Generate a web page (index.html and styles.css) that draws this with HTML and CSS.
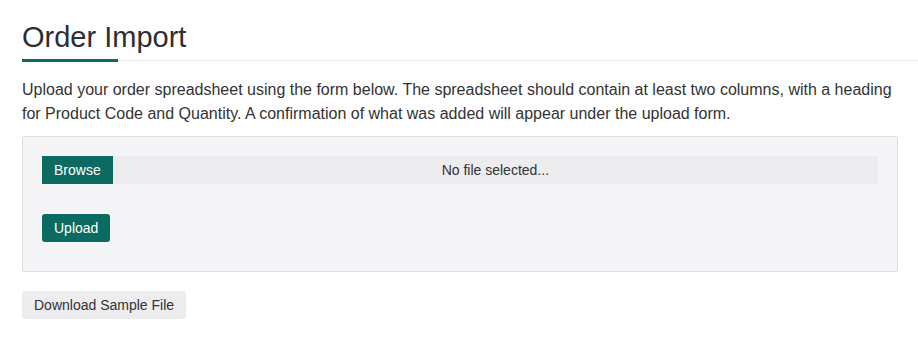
FILE: index.html
```html
<!DOCTYPE html>
<html>
<head>
<meta charset="utf-8">
<link rel="stylesheet" href="styles.css">
</head>
<body>
<div class="page">
  <div class="title-wrap">
    <h1 class="title">Order Import</h1>
  </div>
  <p class="intro">Upload your order spreadsheet using the form below. The spreadsheet should contain at least two columns, with a heading for Product Code and Quantity. A confirmation of what was added will appear under the upload form.</p>
  <div class="panel">
    <div class="file-row">
      <span class="btn btn-green">Browse</span>
      <span class="file-name">No file selected...</span>
    </div>
    <div class="upload-row">
      <span class="btn btn-green btn-round">Upload</span>
    </div>
  </div>
  <span class="btn btn-grey">Download Sample File</span>
</div>
</body>
</html>
```
FILE: styles.css
```css
html, body {
  margin: 0;
  padding: 0;
  background: #fff;
}
body {
  font-family: "Liberation Sans", Arial, sans-serif;
  color: #333;
}
.page {
  padding: 0 20px 0 22px;
}
.title-wrap {
  border-bottom: 1px solid #e8e6ec;
  margin-right: -20px;
  padding-top: 18px;
}
.title {
  display: inline-block;
  width: 96px;
  white-space: nowrap;
  margin: 0 0 -2px 0;
  font-size: 29px;
  font-weight: normal;
  line-height: 38px;
  padding-bottom: 3px;
  border-bottom: 3px solid #0b6b60;
  color: #2d2d35;
}
.intro {
  margin: 17px 0 0 0;
  font-size: 16px;
  line-height: 24px;
  color: #333;
}
.panel {
  margin-top: 10px;
  background: #f5f4f7;
  border: 1px solid #dddcdf;
  border-radius: 3px;
  padding: 19px 19px 29px 19px;
}
.file-row {
  display: flex;
  height: 28px;
  background: #edecef;
}
.file-name {
  flex: 1;
  display: flex;
  align-items: center;
  justify-content: center;
  font-size: 14px;
  color: #333;
}
.upload-row {
  margin-top: 30px;
  display: flex;
}
.btn {
  display: inline-flex;
  align-items: center;
  height: 28px;
  box-sizing: border-box;
  padding: 0 12px;
  font-size: 14px;
}
.btn-green {
  background: #0b6b60;
  color: #fff;
}
.btn-round {
  border-radius: 3px;
}
.btn-grey {
  margin-top: 19px;
  background: #edecef;
  color: #333;
  border-radius: 3px;
}
```
